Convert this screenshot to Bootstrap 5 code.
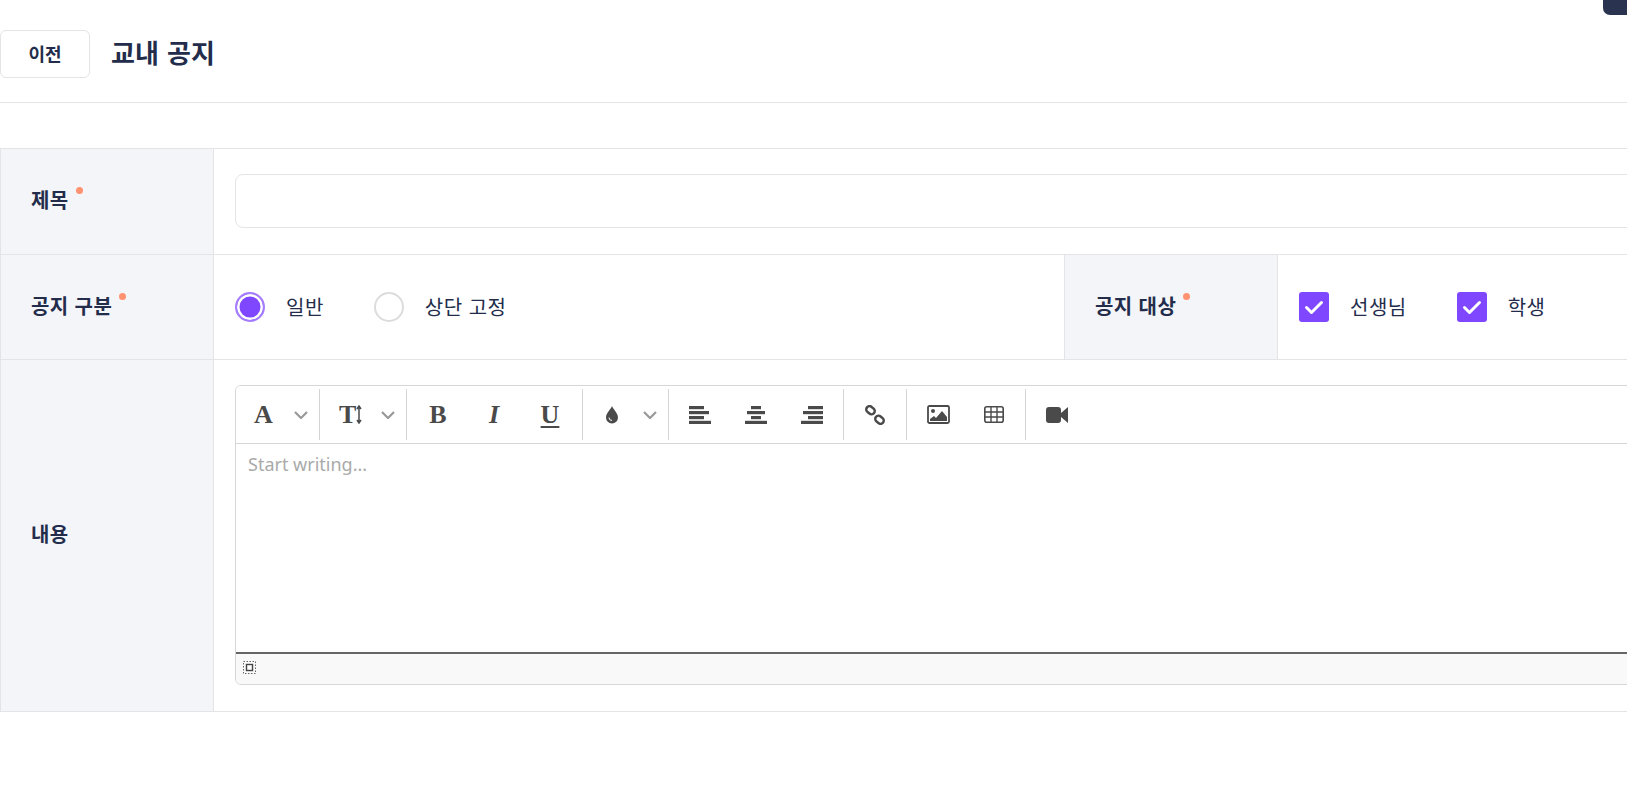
<!DOCTYPE html>
<html lang="ko">
<head>
  <meta charset="UTF-8" />
  <meta name="viewport" content="width=device-width, initial-scale=1" />
  <title>교내 공지</title>
  <link href="https://cdn.jsdelivr.net/npm/bootstrap@5.3.0/dist/css/bootstrap.min.css" rel="stylesheet" />
  <style>
    html, body { overflow: hidden; }
    body { font-family: "Noto Sans CJK KR", "Noto Sans", sans-serif; color: #232d4b; background: #fff; }
    .corner-tab { position: absolute; top: 0; right: 0; width: 24px; height: 15px; background: #2a3350; border-bottom-left-radius: 7px; }
    .page-head { height: 103px; border-bottom: 1px solid #e4e4e7; padding-top: 30px; }
    .back-btn { width: 90px; height: 48px; font-size: 18px; font-weight: 700; color: #232d4b; background: #fff; border: 1px solid #e4e4e7; border-radius: 6px; padding: 0 0 2px; }
    .page-title { font-size: 26px; font-weight: 700; margin: 0 0 0 21px; line-height: 44px; word-spacing: 1px; color: #232d4b; }
    .form-wrap { margin-top: 45px; width: 1720px; }
    .form-tbl { table-layout: fixed; width: 100%; border-collapse: collapse; margin: 0; }
    .form-tbl th, .form-tbl td { border: 1px solid #e4e4e7; vertical-align: middle; padding: 25px 21px 26px; }
    .form-tbl th { background: #f4f5f9; font-size: 20px; font-weight: 700; color: #232d4b; padding: 22px 21px 26px 30px; line-height: 27px; letter-spacing: .4px; }
    .form-tbl .w-label { width: 213px; }
    .form-tbl .w-mid { width: 851px; }
    .form-tbl .w-label2 { width: 213px; }
    .req-dot { display: inline-block; width: 7px; height: 7px; background: #ff9270; border-radius: 50%; margin-left: 7px; vertical-align: 14px; }
    .title-input { height: 54px; border: 1px solid #e4e4e7; border-radius: 8px; }
    .opt-row { height: 53px; }
    .opt-label { font-size: 20px; color: #232d4b; margin-left: 21px; margin-right: 50px; line-height: 30px; letter-spacing: .5px; }
    .opt-input.form-check-input { width: 30px; height: 30px; margin: 0; flex: none; float: none; box-shadow: none; }
    .opt-input[type=radio] { border: 2px solid #dcdcdc; }
    .opt-input[type=radio]:checked { background: #7f47ff; background-image: none; border: 2px solid #a67cff; box-shadow: inset 0 0 0 2.5px #fff; }
    .opt-input[type=checkbox] { border-radius: 3px; border: 0; }
    .opt-input[type=checkbox]:checked { background-color: #7f47ff; background-image: url("data:image/svg+xml,%3csvg xmlns='http://www.w3.org/2000/svg' viewBox='0 0 30 30'%3e%3cpath fill='none' stroke='%23fff' stroke-width='3' stroke-linecap='round' stroke-linejoin='round' d='M7.500 15.500l5 5 10-10'/%3e%3c/svg%3e"); background-size: 30px 30px; }
    .editor-box { border: 1px solid #d6d6d6; border-radius: 6px; overflow: hidden; }
    .tool-bar { height: 58px; border-bottom: 1px solid #d6d6d6; padding: 3px 0; background: #fff; }
    .tool-group { display: flex; height: 51px; border-right: 1px solid #d4d4d4; padding: 0 3px; }
    .tool-group:last-child { border-right: 0; }
    .tool-wide { padding-right: 4px; }
    .tool-btn { width: 56px; height: 51px; display: flex; align-items: center; justify-content: center; background: none; border: 0; padding: 0; color: #4a4a4a; font-family: "Liberation Serif", serif; font-weight: 700; font-size: 26px; line-height: 1; }
    .tool-btn svg { display: block; }
    .tool-drop { justify-content: space-between; padding-right: 8px; }
    .drop-font { width: 77px; padding-left: 15px; }
    .drop-size { width: 80px; padding-left: 16px; }
    .drop-color { width: 79px; padding-left: 19px; }
    .under-u { text-decoration: underline; text-decoration-thickness: 1.5px; text-underline-offset: 3px; font-weight: 700; }
    .edit-area { height: 208px; padding: 7px 12px; font-family: "Noto Sans", sans-serif; font-size: 18px; color: #aaa; line-height: 26px; }
    .status-bar { height: 32px; background: #f9f9f9; border-top: 2px solid #666; padding: 7px 0 0 7px; }
  </style>
</head>
<body>
  <div class="corner-tab"></div>

  <div class="page-head d-flex align-items-start">
    <button type="button" class="btn back-btn">이전</button>
    <h1 class="page-title">교내 공지</h1>
  </div>

  <div class="form-wrap">
    <table class="form-tbl">
      <colgroup>
        <col class="w-label" />
        <col class="w-mid" />
        <col class="w-label2" />
        <col />
      </colgroup>
      <tbody>
        <tr>
          <th scope="row">제목<span class="req-dot"></span></th>
          <td colspan="3"><input type="text" class="form-control title-input" aria-label="제목" /></td>
        </tr>
        <tr>
          <th scope="row">공지 구분<span class="req-dot"></span></th>
          <td>
            <div class="d-flex align-items-center opt-row">
              <input class="form-check-input opt-input" type="radio" name="kind" id="kind1" checked />
              <label class="opt-label" for="kind1">일반</label>
              <input class="form-check-input opt-input" type="radio" name="kind" id="kind2" />
              <label class="opt-label" for="kind2">상단 고정</label>
            </div>
          </td>
          <th scope="row">공지 대상<span class="req-dot"></span></th>
          <td>
            <div class="d-flex align-items-center opt-row">
              <input class="form-check-input opt-input" type="checkbox" id="who1" checked />
              <label class="opt-label" for="who1">선생님</label>
              <input class="form-check-input opt-input" type="checkbox" id="who2" checked />
              <label class="opt-label" for="who2">학생</label>
            </div>
          </td>
        </tr>
        <tr>
          <th scope="row">내용</th>
          <td colspan="3">
            <div class="editor-box">
              <div class="tool-bar d-flex">
                <div class="tool-group">
                  <button type="button" class="tool-btn tool-drop drop-font" aria-label="Font">A
                    <svg width="14" height="8" viewBox="0 0 14 8"><path d="M1 1l6 6 6-6" fill="none" stroke="#999" stroke-width="2.200"/></svg>
                  </button>
                </div>
                <div class="tool-group">
                  <button type="button" class="tool-btn tool-drop drop-size" aria-label="Font size"><span class="d-flex align-items-center">T<svg width="6" height="19" viewBox="0 0 6 19"><path d="M3 2v15M1 4l2-3 2 3M1 15l2 3 2-3" fill="none" stroke="#4a4a4a" stroke-width="1.500"/></svg></span>
                    <svg width="14" height="8" viewBox="0 0 14 8"><path d="M1 1l6 6 6-6" fill="none" stroke="#999" stroke-width="2.200"/></svg>
                  </button>
                </div>
                <div class="tool-group tool-wide">
                  <button type="button" class="tool-btn" aria-label="Bold">B</button>
                  <button type="button" class="tool-btn fst-italic" aria-label="Italic">I</button>
                  <button type="button" class="tool-btn" aria-label="Underline"><span class="under-u">U</span></button>
                </div>
                <div class="tool-group">
                  <button type="button" class="tool-btn tool-drop drop-color" aria-label="Color">
                    <svg width="14" height="18" viewBox="0 0 14 18"><path d="M7 0c1 3 6 7 6 11.500a6 6 0 0 1-12 0C1 7 6 3 7 0z" fill="#4a4a4a"/><path d="M4 11.500a3 3 0 0 0 3 3" fill="none" stroke="#fff" stroke-width="1"/></svg>
                    <svg width="14" height="8" viewBox="0 0 14 8"><path d="M1 1l6 6 6-6" fill="none" stroke="#999" stroke-width="2.200"/></svg>
                  </button>
                </div>
                <div class="tool-group">
                  <button type="button" class="tool-btn" aria-label="Align left">
                    <svg width="22" height="18" viewBox="0 0 22 18" fill="#4a4a4a"><rect x="0" y="0" width="15" height="3.200"/><rect x="0" y="5" width="20" height="3.200"/><rect x="0" y="10" width="15" height="3.200"/><rect x="0" y="14.800" width="22" height="3.200"/></svg>
                  </button>
                  <button type="button" class="tool-btn" aria-label="Align center">
                    <svg width="22" height="18" viewBox="0 0 22 18" fill="#4a4a4a"><rect x="6" y="0" width="10" height="3.200"/><rect x="2" y="5" width="18" height="3.200"/><rect x="6" y="10" width="10" height="3.200"/><rect x="0" y="14.800" width="22" height="3.200"/></svg>
                  </button>
                  <button type="button" class="tool-btn" aria-label="Align right">
                    <svg width="22" height="18" viewBox="0 0 22 18" fill="#4a4a4a"><rect x="7" y="0" width="15" height="3.200"/><rect x="2" y="5" width="20" height="3.200"/><rect x="7" y="10" width="15" height="3.200"/><rect x="0" y="14.800" width="22" height="3.200"/></svg>
                  </button>
                </div>
                <div class="tool-group">
                  <button type="button" class="tool-btn" aria-label="Link">
                    <svg width="20" height="20" viewBox="0 0 20 20" fill="none" stroke="#4a4a4a" stroke-width="2.500"><rect x="1" y="2" width="9" height="6.500" rx="3.200" transform="rotate(40 5.500 5.250)"/><rect x="10" y="11.500" width="9" height="6.500" rx="3.200" transform="rotate(40 14.500 14.750)"/></svg>
                  </button>
                </div>
                <div class="tool-group">
                  <button type="button" class="tool-btn" aria-label="Image">
                    <svg width="23" height="19" viewBox="0 0 23 19"><rect x="1" y="1" width="21" height="17" rx="1.500" fill="none" stroke="#4a4a4a" stroke-width="1.800"/><circle cx="6" cy="6" r="2" fill="#4a4a4a"/><path d="M3 16v-2l4-3 2 2 6-7 5 6v4z" fill="#4a4a4a"/></svg>
                  </button>
                  <button type="button" class="tool-btn" aria-label="Table">
                    <svg width="20" height="17" viewBox="0 0 20 17"><rect x=".8" y=".8" width="18.400" height="15.400" rx="2" fill="none" stroke="#4a4a4a" stroke-width="1.600"/><path d="M1 6h18M1 11h18M7 1v15M13 1v15" stroke="#4a4a4a" stroke-width="1.400"/></svg>
                  </button>
                </div>
                <div class="tool-group">
                  <button type="button" class="tool-btn" aria-label="Video">
                    <svg width="22" height="16" viewBox="0 0 22 16" fill="#4a4a4a"><rect x="0" y="0" width="15" height="16" rx="3"/><path d="M15 6l7-6v16l-7-6z"/></svg>
                  </button>
                </div>
              </div>
              <div class="edit-area">Start writing...</div>
              <div class="status-bar">
                <svg class="d-block" width="13" height="13" viewBox="0 0 13 13"><rect x=".5" y=".5" width="12" height="12" fill="none" stroke="#666" stroke-dasharray="1.500 1.500"/><rect x="3.500" y="3.500" width="6" height="6" fill="#fff" stroke="#444" stroke-width="1.400"/></svg>
              </div>
            </div>
          </td>
        </tr>
      </tbody>
    </table>
  </div>

  <script src="https://cdn.jsdelivr.net/npm/bootstrap@5.3.0/dist/js/bootstrap.bundle.min.js"></script>
</body>
</html>
